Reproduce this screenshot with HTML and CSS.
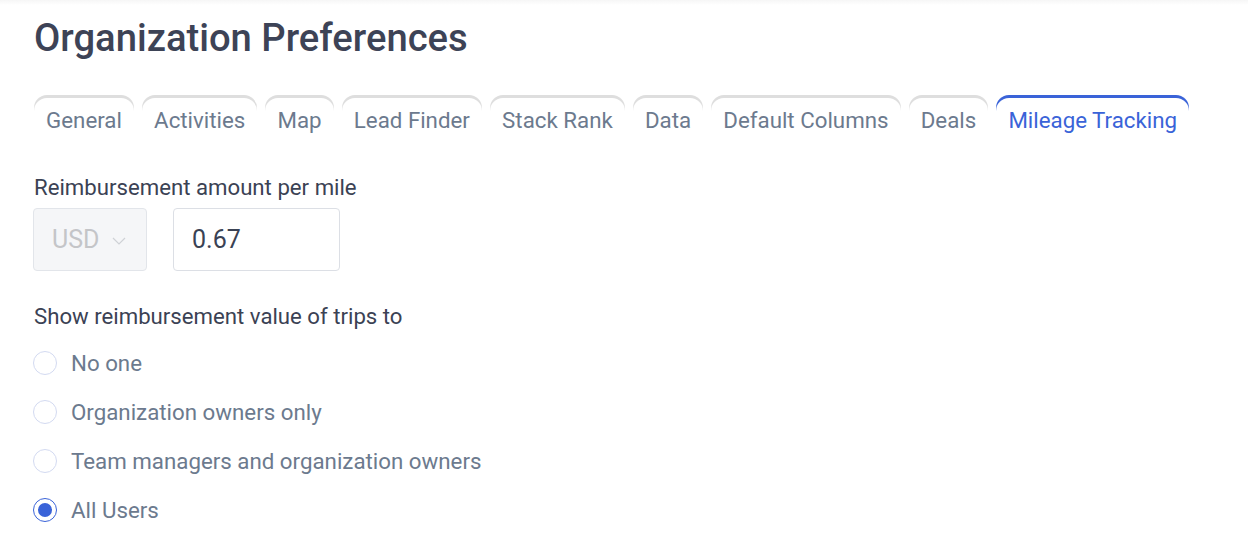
FILE: index.html
```html
<!DOCTYPE html>
<html>
<head>
<meta charset="utf-8">
<link rel="stylesheet" href="styles.css">
</head>
<body>
<div class="topbar"></div>
<main class="page">
  <h1 class="title">Organization Preferences</h1>
  <nav class="tabs">
    <div class="tab">General</div>
    <div class="tab">Activities</div>
    <div class="tab">Map</div>
    <div class="tab">Lead Finder</div>
    <div class="tab">Stack Rank</div>
    <div class="tab">Data</div>
    <div class="tab">Default Columns</div>
    <div class="tab">Deals</div>
    <div class="tab active">Mileage Tracking</div>
  </nav>
  <section class="field">
    <div class="label">Reimbursement amount per mile</div>
    <div class="inputs">
      <div class="select">
        <span>USD</span>
        <svg class="chev" width="14" height="8" viewBox="0 0 14 8"><path d="M1 1 L7 7 L13 1" fill="none" stroke="#cfd2d6" stroke-width="1.2"/></svg>
      </div>
      <div class="input">0.67</div>
    </div>
  </section>
  <section class="field2">
    <div class="label">Show reimbursement value of trips to</div>
    <div class="radios">
      <label class="radio"><span class="dot"></span>No one</label>
      <label class="radio"><span class="dot"></span>Organization owners only</label>
      <label class="radio"><span class="dot"></span>Team managers and organization owners</label>
      <label class="radio checked"><span class="dot"></span>All Users</label>
    </div>
  </section>
</main>
</body>
</html>
```

FILE: styles.css
```css
html, body {
  margin: 0;
  padding: 0;
  background: #ffffff;
  font-family: Roboto, "Noto Sans", sans-serif;
}
.topbar {
  height: 5px;
  background: linear-gradient(#f6f6f6, #ffffff);
}
.page {
  padding: 0 0 0 34px;
}
.title {
  margin: 11px 0 0 0;
  font-size: 38.2px;
  line-height: 44px;
  font-weight: 500;
  color: #3d4356;
}
.tabs {
  display: flex;
  gap: 8px;
  margin-top: 38px;
}
.tab {
  padding: 9px 12.1px 9px 12.1px;
  font-size: 22.3px;
  line-height: 26px;
  color: #6c7a8e;
  border-radius: 13px 13px 0 0;
  box-shadow: 0 -3px 0 0 #dedede;
}
.tab.active {
  color: #3a63d8;
  box-shadow: 0 -3px 0 0 #3a63d8;
}
.field {
  margin-top: 32px;
}
.label {
  font-size: 22.2px;
  line-height: 26px;
  color: #3b4254;
}
.inputs {
  display: flex;
  gap: 26px;
  margin-top: 8px;
  margin-left: -1px;
}
.select {
  box-sizing: border-box;
  width: 114px;
  height: 63px;
  background: #f5f6f8;
  border: 1px solid #e2e5ea;
  border-radius: 4px;
  display: flex;
  align-items: center;
  padding-left: 18px;
  gap: 13px;
  font-size: 25px;
  color: #c4c5c8;
}
.chev {
  margin-top: 2px;
}
.input {
  box-sizing: border-box;
  width: 167px;
  height: 63px;
  border: 1px solid #dcdfe5;
  border-radius: 4px;
  display: flex;
  align-items: center;
  padding-left: 18px;
  font-size: 25px;
  color: #3a4254;
}
.field2 {
  margin-top: 32px;
}
.radios {
  display: flex;
  flex-direction: column;
  gap: 23px;
  margin-top: 21px;
}
.radio {
  display: flex;
  align-items: center;
  gap: 14px;
  font-size: 22.3px;
  line-height: 26px;
  color: #6c7a8e;
  margin-left: -1px;
}
.dot {
  box-sizing: border-box;
  width: 24px;
  height: 24px;
  border-radius: 50%;
  border: 1px solid #d3daf1;
  background: #fff;
  display: flex;
  align-items: center;
  justify-content: center;
}
.radio.checked .dot {
  border-color: #3a63d8;
}
.radio.checked .dot::after {
  content: "";
  width: 14px;
  height: 14px;
  border-radius: 50%;
  background: #3a63d8;
}
```
